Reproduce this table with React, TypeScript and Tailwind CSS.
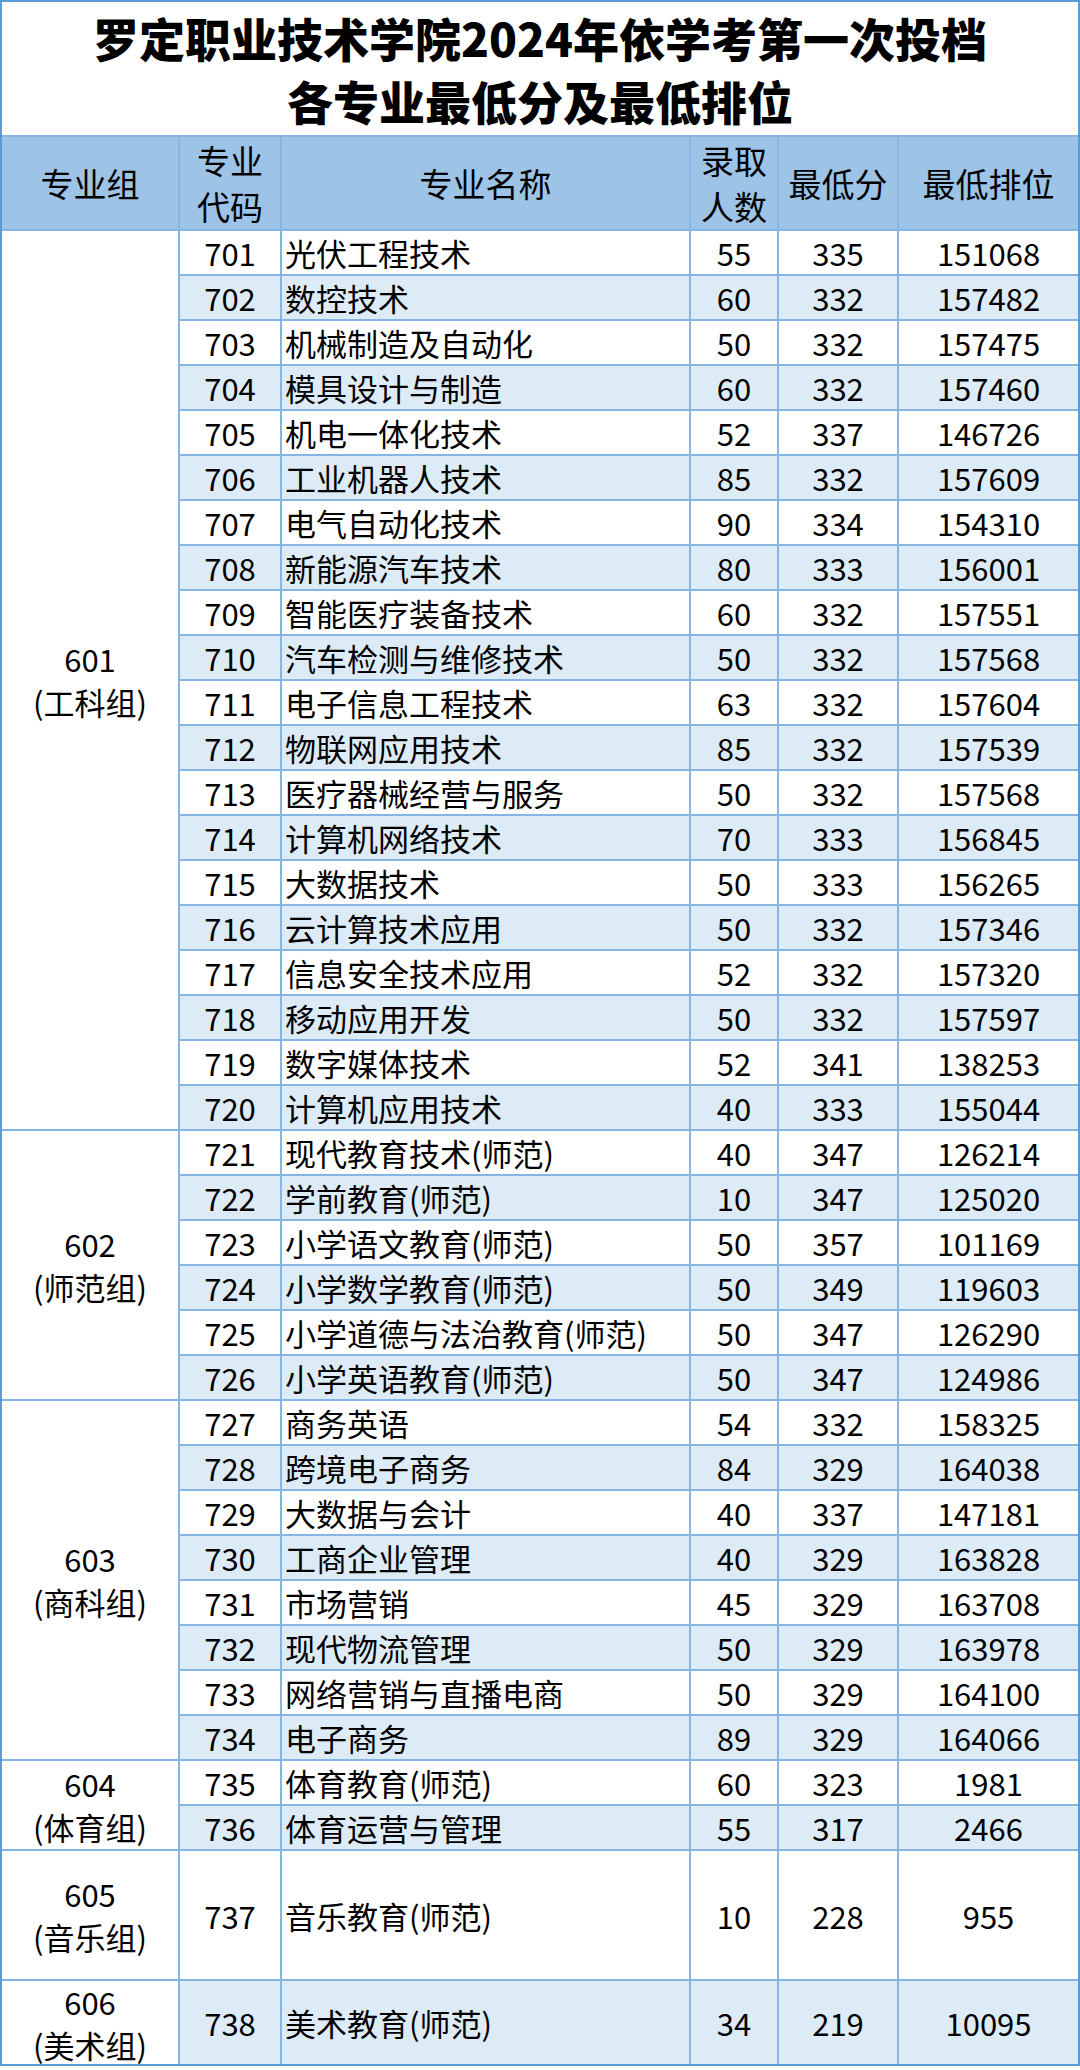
import React from "react";

type Row = [string, string, string, string, string];
type Group = { code: string; name: string; rows: Row[] };

const groups: Group[] = [
  {
    code: "601",
    name: "(工科组)",
    rows: [
      ["701", "光伏工程技术", "55", "335", "151068"],
      ["702", "数控技术", "60", "332", "157482"],
      ["703", "机械制造及自动化", "50", "332", "157475"],
      ["704", "模具设计与制造", "60", "332", "157460"],
      ["705", "机电一体化技术", "52", "337", "146726"],
      ["706", "工业机器人技术", "85", "332", "157609"],
      ["707", "电气自动化技术", "90", "334", "154310"],
      ["708", "新能源汽车技术", "80", "333", "156001"],
      ["709", "智能医疗装备技术", "60", "332", "157551"],
      ["710", "汽车检测与维修技术", "50", "332", "157568"],
      ["711", "电子信息工程技术", "63", "332", "157604"],
      ["712", "物联网应用技术", "85", "332", "157539"],
      ["713", "医疗器械经营与服务", "50", "332", "157568"],
      ["714", "计算机网络技术", "70", "333", "156845"],
      ["715", "大数据技术", "50", "333", "156265"],
      ["716", "云计算技术应用", "50", "332", "157346"],
      ["717", "信息安全技术应用", "52", "332", "157320"],
      ["718", "移动应用开发", "50", "332", "157597"],
      ["719", "数字媒体技术", "52", "341", "138253"],
      ["720", "计算机应用技术", "40", "333", "155044"],
    ],
  },
  {
    code: "602",
    name: "(师范组)",
    rows: [
      ["721", "现代教育技术(师范)", "40", "347", "126214"],
      ["722", "学前教育(师范)", "10", "347", "125020"],
      ["723", "小学语文教育(师范)", "50", "357", "101169"],
      ["724", "小学数学教育(师范)", "50", "349", "119603"],
      ["725", "小学道德与法治教育(师范)", "50", "347", "126290"],
      ["726", "小学英语教育(师范)", "50", "347", "124986"],
    ],
  },
  {
    code: "603",
    name: "(商科组)",
    rows: [
      ["727", "商务英语", "54", "332", "158325"],
      ["728", "跨境电子商务", "84", "329", "164038"],
      ["729", "大数据与会计", "40", "337", "147181"],
      ["730", "工商企业管理", "40", "329", "163828"],
      ["731", "市场营销", "45", "329", "163708"],
      ["732", "现代物流管理", "50", "329", "163978"],
      ["733", "网络营销与直播电商", "50", "329", "164100"],
      ["734", "电子商务", "89", "329", "164066"],
    ],
  },
  {
    code: "604",
    name: "(体育组)",
    rows: [
      ["735", "体育教育(师范)", "60", "323", "1981"],
      ["736", "体育运营与管理", "55", "317", "2466"],
    ],
  },
  {
    code: "605",
    name: "(音乐组)",
    rows: [["737", "音乐教育(师范)", "10", "228", "955"]],
  },
  {
    code: "606",
    name: "(美术组)",
    rows: [["738", "美术教育(师范)", "34", "219", "10095"]],
  },
];

const spanClass: Record<number, string> = {
  20: "row-span-20",
  6: "row-span-6",
  8: "row-span-8",
  2: "row-span-2",
  1: "row-span-1",
};

const font = { fontFamily: '"Noto Sans CJK SC", "Noto Sans", sans-serif' };

export default function App() {
  let idx = 0;
  const cells: React.ReactNode[] = [];
  groups.forEach((g) => {
    cells.push(
      <div
        key={"g" + g.code}
        className={`${spanClass[g.rows.length]} bg-white flex flex-col items-center justify-center text-[31px] leading-[43px] text-black`}
      >
        <span>{g.code}</span>
        <span>{g.name}</span>
      </div>
    );
    g.rows.forEach((r) => {
      const bg = idx % 2 === 1 ? "bg-[#ddebf7]" : "bg-white";
      idx++;
      cells.push(
        <div key={r[0] + "a"} className={`${bg} flex items-center justify-center`}>
          {r[0]}
        </div>,
        <div key={r[0] + "b"} className={`${bg} flex items-center justify-start pl-[3px] whitespace-nowrap`}>
          {r[1]}
        </div>,
        <div key={r[0] + "c"} className={`${bg} flex items-center justify-center`}>
          {r[2]}
        </div>,
        <div key={r[0] + "d"} className={`${bg} flex items-center justify-center`}>
          {r[3]}
        </div>,
        <div key={r[0] + "e"} className={`${bg} flex items-center justify-center`}>
          {r[4]}
        </div>
      );
    });
  });

  return (
    <div className="w-[1080px] bg-white" style={font}>
      <div className="w-[1080px] border-2 border-[#5b9bd5] bg-[#86b4e3] grid gap-[2px] grid-cols-[176px_100px_407px_86px_118px_179px] grid-rows-[133px_92px_repeat(36,43px)_128px_83px] text-[31px] leading-[43px] text-black">
        <div className="col-span-6 bg-white flex flex-col items-center justify-center font-black text-[46px] leading-[63px] text-black">
          <div>罗定职业技术学院2024年依学考第一次投档</div>
          <div>各专业最低分及最低排位</div>
        </div>
        <div className="bg-[#9dc3e6] flex items-center justify-center text-[33px] leading-[46px]">专业组</div>
        <div className="bg-[#9dc3e6] flex flex-col items-center justify-center text-[33px] leading-[46px]">
          <span>专业</span>
          <span>代码</span>
        </div>
        <div className="bg-[#9dc3e6] flex items-center justify-center text-[33px] leading-[46px]">专业名称</div>
        <div className="bg-[#9dc3e6] flex flex-col items-center justify-center text-[33px] leading-[46px]">
          <span>录取</span>
          <span>人数</span>
        </div>
        <div className="bg-[#9dc3e6] flex items-center justify-center text-[33px] leading-[46px]">最低分</div>
        <div className="bg-[#9dc3e6] flex items-center justify-center text-[33px] leading-[46px]">最低排位</div>
        {cells}
      </div>
    </div>
  );
}
